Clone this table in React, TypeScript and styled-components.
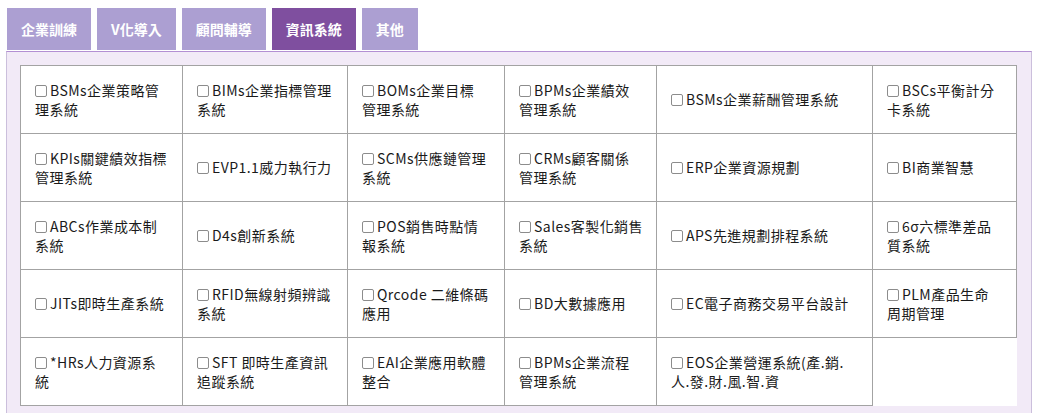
import React, { useState } from 'react';
import styled, { createGlobalStyle } from 'styled-components';

const GlobalStyle = createGlobalStyle`
  body {
    margin: 0;
    background: #fff;
    font-family: "Noto Sans CJK TC", "Noto Sans", sans-serif;
  }
`;

const Page = styled.div`
  padding: 8px 6px 0 6px;
`;

const TabBar = styled.div`
  display: flex;
  gap: 6px;
  padding-left: 1px;
`;

const Tab = styled.button<{ $active?: boolean }>`
  height: 42px;
  padding: 0 14px;
  border: 0;
  margin: 0;
  background: ${(p) => (p.$active ? '#7f4f9f' : '#ac9fd2')};
  color: #fff;
  font-family: "Noto Sans CJK TC", sans-serif;
  font-size: 14px;
  font-weight: 700;
  line-height: 42px;
  cursor: pointer;
`;

const Panel = styled.div`
  margin-top: 1px;
  background: #f2eaf7;
  border: 1px solid #cbbfdc;
  border-top-color: #b38fd3;
  padding: 13px 14px 13px 13px;
`;

const Grid = styled.div`
  display: grid;
  grid-template-columns: 162px 165px 157px 152px 216px 144px;
  grid-auto-rows: 68px;
  border-left: 1px solid #a3a3a3;
  border-top: 1px solid #a3a3a3;
  background: #fff;
  width: max-content;
`;

const Cell = styled.label<{ $empty?: boolean }>`
  display: flex;
  align-items: center;
  padding: 0 8px 0 14px;
  border-right: ${(p) => (p.$empty ? '0' : '1px solid #a3a3a3')};
  border-bottom: ${(p) => (p.$empty ? '0' : '1px solid #a3a3a3')};
  background: #fff;
  color: #1a1a1a;
  font-size: 14px;
  line-height: 19px;
  letter-spacing: 0.45px;
  white-space: pre-line;
  cursor: pointer;
`;

const Text = styled.span`
  display: block;
`;

const Check = styled.input`
  appearance: none;
  width: 12px;
  height: 12px;
  margin: 0 3px 0 0;
  border: 1px solid #8c8c8c;
  border-radius: 2px;
  background: #fff;
  vertical-align: -1px;
  cursor: pointer;
  &:checked {
    background: #7f4f9f;
    border-color: #7f4f9f;
  }
`;

const tabs = ['企業訓練', 'V化導入', '顧問輔導', '資訊系統', '其他'];

const items = [
  'BSMs企業策略管\n理系統',
  'BIMs企業指標管理\n系統',
  'BOMs企業目標\n管理系統',
  'BPMs企業績效\n管理系統',
  'BSMs企業薪酬管理系統',
  'BSCs平衡計分\n卡系統',
  'KPIs關鍵績效指標\n管理系統',
  'EVP1.1威力執行力',
  'SCMs供應鏈管理\n系統',
  'CRMs顧客關係\n管理系統',
  'ERP企業資源規劃',
  'BI商業智慧',
  'ABCs作業成本制\n系統',
  'D4s創新系統',
  'POS銷售時點情\n報系統',
  'Sales客製化銷售\n系統',
  'APS先進規劃排程系統',
  '6σ六標準差品\n質系統',
  'JITs即時生產系統',
  'RFID無線射頻辨識\n系統',
  'Qrcode 二維條碼\n應用',
  'BD大數據應用',
  'EC電子商務交易平台設計',
  'PLM產品生命\n周期管理',
  '*HRs人力資源系\n統',
  'SFT 即時生產資訊\n追蹤系統',
  'EAI企業應用軟體\n整合',
  'BPMs企業流程\n管理系統',
  'EOS企業營運系統(產.銷.\n人.發.財.風.智.資'
];

export default function App() {
  const [active, setActive] = useState(3);

  return (
    <Page>
      <GlobalStyle />
      <TabBar>
        {tabs.map((t, i) => (
          <Tab key={t} $active={i === active} onClick={() => setActive(i)}>
            {t}
          </Tab>
        ))}
      </TabBar>
      <Panel>
        <Grid>
          {items.map((label) => (
            <Cell key={label}>
              <Text>
                <Check type="checkbox" />
                {label}
              </Text>
            </Cell>
          ))}
          <Cell as="div" $empty />
        </Grid>
      </Panel>
    </Page>
  );
}
